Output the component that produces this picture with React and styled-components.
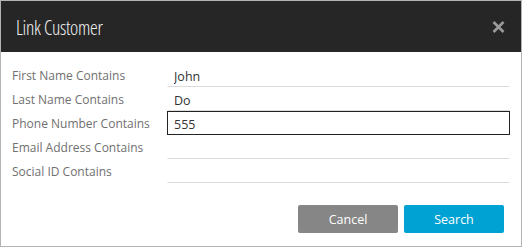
import React, { useState } from 'react';
import styled, { createGlobalStyle } from 'styled-components';

const GlobalStyle = createGlobalStyle`
  html, body {
    margin: 0;
    padding: 0;
    background: #fff;
  }
  body {
    font-family: "Open Sans", "Liberation Sans", sans-serif;
  }
`;

const Dialog = styled.div`
  width: 522px;
  height: 247px;
  box-sizing: border-box;
  border: 1px solid #b3b3b3;
  background: #fff;
  display: flex;
  flex-direction: column;
`;

const Header = styled.div`
  height: 51px;
  background: #262626;
  display: flex;
  align-items: center;
  justify-content: space-between;
  padding: 0 16px 0 15px;
  flex-shrink: 0;
`;

const Title = styled.h1`
  margin: 0;
  font-family: "Open Sans", "Liberation Sans", sans-serif;
  font-stretch: 75%;
  font-weight: 300;
  font-size: 19.5px;
  color: #f2f2f2;
  letter-spacing: -0.3px;
  padding-top: 2px;
`;

const CloseButton = styled.button`
  background: none;
  border: none;
  padding: 0;
  margin: 0;
  width: 14px;
  height: 14px;
  display: flex;
  align-items: center;
  justify-content: center;
  cursor: pointer;
`;

const Body = styled.form`
  flex: 1;
  display: flex;
  flex-direction: column;
  padding: 11px 11px 13px 11px;
`;

const Fields = styled.div`
  display: flex;
  flex-direction: column;
`;

const Row = styled.div`
  display: grid;
  grid-template-columns: 155px 1fr;
  height: 24px;
  align-items: stretch;
`;

const Label = styled.label`
  font-size: 12px;
  color: #707070;
  display: flex;
  align-items: center;
  padding-top: 1px;
`;

const Input = styled.input`
  font-family: "Open Sans", "Liberation Sans", sans-serif;
  font-size: 12.5px;
  color: #333;
  border: 1px solid transparent;
  border-bottom-color: ${(p) => (p.$focused ? '#222' : '#dcdcdc')};
  border-color: ${(p) => (p.$focused ? '#222' : undefined)};
  outline: none;
  padding: 3px 6px 0 6px;
  margin: 0;
  height: 24px;
  box-sizing: border-box;
  background: transparent;
`;

const Actions = styled.div`
  margin-top: auto;
  display: flex;
  justify-content: flex-end;
  gap: 6px;
  padding-right: 6px;
`;

const Button = styled.button`
  width: 100px;
  height: 28px;
  border: none;
  border-radius: 2px;
  background: ${(p) => (p.$primary ? '#00a2d3' : '#868686')};
  color: #fff;
  font-family: "Open Sans", "Liberation Sans", sans-serif;
  font-size: 12.5px;
  cursor: pointer;
`;

const fields = [
  { id: 'first', label: 'First Name Contains', value: 'John' },
  { id: 'last', label: 'Last Name Contains', value: 'Do' },
  { id: 'phone', label: 'Phone Number Contains', value: '555', focused: true },
  { id: 'email', label: 'Email Address Contains', value: '' },
  { id: 'social', label: 'Social ID Contains', value: '' },
];

const CloseIcon = () => (
  <svg width="13" height="12" viewBox="0 0 13 12">
    <path d="M1.5 1 L11.5 11 M11.5 1 L1.5 11" stroke="#9a9a9a" strokeWidth="2.6" />
  </svg>
);

const App = () => {
  const [values, setValues] = useState(
    Object.fromEntries(fields.map((f) => [f.id, f.value]))
  );

  const handleChange = (e) => {
    setValues({ ...values, [e.target.name]: e.target.value });
  };

  return (
    <>
      <GlobalStyle />
      <Dialog>
        <Header>
          <Title>Link Customer</Title>
          <CloseButton type="button" aria-label="Close">
            <CloseIcon />
          </CloseButton>
        </Header>
        <Body onSubmit={(e) => e.preventDefault()}>
          <Fields>
            {fields.map((f) => (
              <Row key={f.id}>
                <Label htmlFor={f.id}>{f.label}</Label>
                <Input
                  id={f.id}
                  name={f.id}
                  value={values[f.id]}
                  onChange={handleChange}
                  $focused={f.focused}
                />
              </Row>
            ))}
          </Fields>
          <Actions>
            <Button type="button">Cancel</Button>
            <Button type="submit" $primary>Search</Button>
          </Actions>
        </Body>
      </Dialog>
    </>
  );
};

export default App;
